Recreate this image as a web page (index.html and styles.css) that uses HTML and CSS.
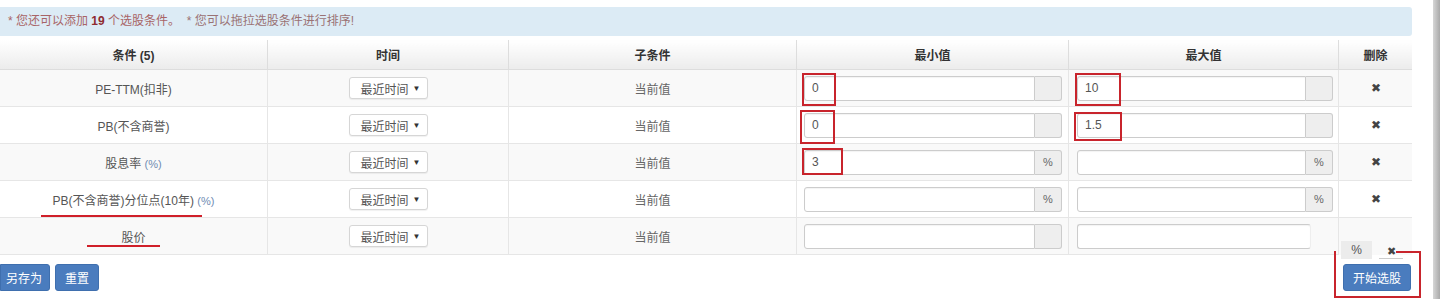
FILE: index.html
```html
<!DOCTYPE html>
<html lang="zh-CN">
<head>
    <meta charset="UTF-8">
    <title>选股条件</title>
    <link rel="stylesheet" href="styles.css">
</head>
<body>
    <div class="page">
        <div class="alert">
            * 您还可以添加 <b>19</b> 个选股条件。&nbsp; <span class="tip">* 您可以拖拉选股条件进行排序!</span>
        </div>

        <table class="grid">
            <thead>
                <tr>
                    <th class="c-name">条件 (5)</th>
                    <th class="c-time">时间</th>
                    <th class="c-sub">子条件</th>
                    <th class="c-min">最小值</th>
                    <th class="c-max">最大值</th>
                    <th class="c-del">删除</th>
                </tr>
            </thead>
            <tbody>
                <tr>
                    <td>PE-TTM(扣非)</td>
                    <td><div class="sel">最近时间<span class="caret">▼</span></div></td>
                    <td class="sub">当前值</td>
                    <td class="min"><div class="group"><div class="inp">0</div><div class="addon"></div><i class="mark m1"></i></div></td>
                    <td class="max"><div class="group"><div class="inp">10</div><div class="addon"></div><i class="mark m2"></i></div></td>
                    <td class="del">✖</td>
                </tr>
                <tr>
                    <td>PB(不含商誉)</td>
                    <td><div class="sel">最近时间<span class="caret">▼</span></div></td>
                    <td class="sub">当前值</td>
                    <td class="min"><div class="group"><div class="inp">0</div><div class="addon"></div><i class="mark m3"></i></div></td>
                    <td class="max"><div class="group"><div class="inp">1.5</div><div class="addon"></div><i class="mark m4"></i></div></td>
                    <td class="del">✖</td>
                </tr>
                <tr>
                    <td>股息率 <span class="unit">(%)</span></td>
                    <td><div class="sel">最近时间<span class="caret">▼</span></div></td>
                    <td class="sub">当前值</td>
                    <td class="min"><div class="group"><div class="inp">3</div><div class="addon">%</div><i class="mark m5"></i></div></td>
                    <td class="max"><div class="group"><div class="inp"></div><div class="addon">%</div></div></td>
                    <td class="del">✖</td>
                </tr>
                <tr>
                    <td class="name">PB(不含商誉)分位点(10年) <span class="unit">(%)</span><i class="line l1"></i></td>
                    <td><div class="sel">最近时间<span class="caret">▼</span></div></td>
                    <td class="sub">当前值</td>
                    <td class="min"><div class="group"><div class="inp"></div><div class="addon">%</div></div></td>
                    <td class="max"><div class="group"><div class="inp"></div><div class="addon">%</div></div></td>
                    <td class="del">✖</td>
                </tr>
                <tr>
                    <td class="name">股价<i class="line l2"></i></td>
                    <td><div class="sel">最近时间<span class="caret">▼</span></div></td>
                    <td class="sub">当前值</td>
                    <td class="min"><div class="group"><div class="inp"></div><div class="addon"></div></div></td>
                    <td class="max"><div class="group"><div class="inp fade"></div></div></td>
                    <td class="del last">
                        <div class="stray"><span class="stray-pct">%</span><span class="stray-x">✖</span></div>
                    </td>
                </tr>
            </tbody>
        </table>

        <div class="actions">
            <div class="left">
                <button class="btn">另存为</button>
                <button class="btn">重置</button>
            </div>
            <div class="right">
                <button class="btn">开始选股</button>
                <i class="frame"></i>
            </div>
        </div>
    </div>
    <div class="scroll"></div>
</body>
</html>
```

FILE: styles.css
```css
body {
    margin: 0;
    display: flex;
    font-family: "Liberation Sans", "Noto Sans CJK SC", sans-serif;
    font-size: 12px;
    color: #555;
    background: #fff;
    height: 299px;
    overflow: hidden;
}

.page {
    width: 1412px;
}

.scroll {
    margin-left: auto;
    width: 7px;
    background: linear-gradient(to right, #d6d6d6, #a9a9a9);
}

.alert {
    margin-top: 7px;
    height: 29px;
    line-height: 29px;
    padding-left: 8px;
    background: #dcebf5;
    border-radius: 0 3px 3px 0;
    color: #a86466;
}

.alert b {
    color: #8e2b30;
}

.alert .tip {
    color: #9a7274;
}

.grid {
    margin-top: 4px;
    width: 1412px;
    border-collapse: collapse;
    table-layout: fixed;
}

.grid th {
    height: 29px;
    padding: 0;
    font-weight: bold;
    color: #333;
    background: linear-gradient(to bottom, #fff, #ececec);
    border-left: 1px solid #ddd;
    border-bottom: 1px solid #ddd;
}

.grid th:first-child,
.grid td:first-child {
    border-left: none;
}

.c-name { width: 267px; }
.c-time { width: 240px; }
.c-sub { width: 287px; }
.c-min { width: 271px; }
.c-max { width: 269px; }
.c-del { width: 73px; }

.grid td {
    height: 36px;
    padding: 0;
    text-align: center;
    border-left: 1px solid #e6e6e6;
    border-bottom: 1px solid #e6e6e6;
    position: relative;
}

.grid tbody tr:nth-child(odd) td {
    background: #f9f9f9;
}

.unit {
    color: #6f8cb3;
    font-size: 11px;
}

.sub {
    color: #666;
}

.sel {
    display: inline-flex;
    align-items: center;
    justify-content: space-between;
    box-sizing: border-box;
    width: 79px;
    height: 22px;
    padding: 0 6px 0 11px;
    background: #fff;
    border: 1px solid #d6d6d6;
    border-radius: 3px;
    box-shadow: 0 1px 1px rgba(0, 0, 0, 0.06);
    color: #555;
    vertical-align: middle;
}

.caret {
    font-size: 8px;
    color: #333;
}

.min {
    padding: 0 6px 0 7px !important;
}

.max {
    padding: 0 5px 0 8px !important;
}

.group {
    display: flex;
    height: 25px;
    position: relative;
}

.inp {
    flex: 1;
    box-sizing: border-box;
    border: 1px solid #ccc;
    border-radius: 3px 0 0 3px;
    background: #fff;
    text-align: left;
    padding-left: 7px;
    line-height: 23px;
    color: #555;
    box-shadow: inset 0 1px 1px rgba(0, 0, 0, 0.05);
}

.inp.fade {
    flex: none;
    width: 234px;
    border-radius: 3px;
    border-right-color: #eee;
}

.addon {
    width: 27px;
    box-sizing: border-box;
    border: 1px solid #ccc;
    border-left: none;
    border-radius: 0 3px 3px 0;
    background: #eee;
    line-height: 23px;
    color: #666;
    font-size: 11px;
}

.mark {
    position: absolute;
    border: 2px solid #c8242c;
    box-sizing: border-box;
}

.m1 { left: -2px; top: -3px; width: 34px; height: 33px; }
.m2 { left: -2px; top: -3px; width: 46px; height: 33px; }
.m3 { left: -4px; top: -3px; width: 35px; height: 34px; }
.m4 { left: -3px; top: -1px; width: 48px; height: 29px; }
.m5 { left: -2px; top: -2px; width: 41px; height: 27px; }

.line {
    position: absolute;
    height: 2px;
    background: #d0202a;
}

.l1 { left: 41px; width: 161px; top: 34px; }
.l2 { left: 87px; width: 73px; top: 27px; }

.del {
    color: #444;
    font-size: 12px;
}

.grid td.last {
    background: #fff;
    border-bottom: none;
}

.stray {
    position: absolute;
    left: 2px;
    top: 23px;
    width: 66px;
    height: 18px;
    display: flex;
    align-items: center;
    z-index: 2;
}

.stray-pct {
    width: 31px;
    height: 18px;
    line-height: 18px;
    background: #ececec;
    color: #555;
    font-size: 12px;
}

.stray-x {
    margin-left: 7px;
    padding-top: 4px;
    border-bottom: 1px solid #ccc;
    width: 24px;
    font-size: 11px;
}

.actions {
    display: flex;
    justify-content: space-between;
    margin-top: 9px;
}

.left {
    display: flex;
    gap: 5px;
}

.btn {
    height: 27px;
    padding: 0 9px;
    border: 1px solid #3f6fae;
    border-radius: 3px;
    background: #4a7cbe;
    color: #fff;
    font-family: "Liberation Sans", "Noto Sans CJK SC", sans-serif;
    font-size: 12px;
    cursor: pointer;
}

.left .btn:first-child {
    padding-left: 5px;
    padding-right: 7px;
    border-radius: 0 3px 3px 0;
}

.right {
    position: relative;
    margin-right: 1px;
}

.right .btn {
    width: 68px;
    padding: 0;
}

.frame {
    position: absolute;
    left: -9px;
    top: -13px;
    width: 87px;
    height: 47px;
    box-sizing: border-box;
    border: 2px solid #c8242c;
    border-top: none;
}

.frame::after {
    content: "";
    position: absolute;
    right: -2px;
    top: 0;
    width: 25px;
    height: 2px;
    background: #c8242c;
}
```
